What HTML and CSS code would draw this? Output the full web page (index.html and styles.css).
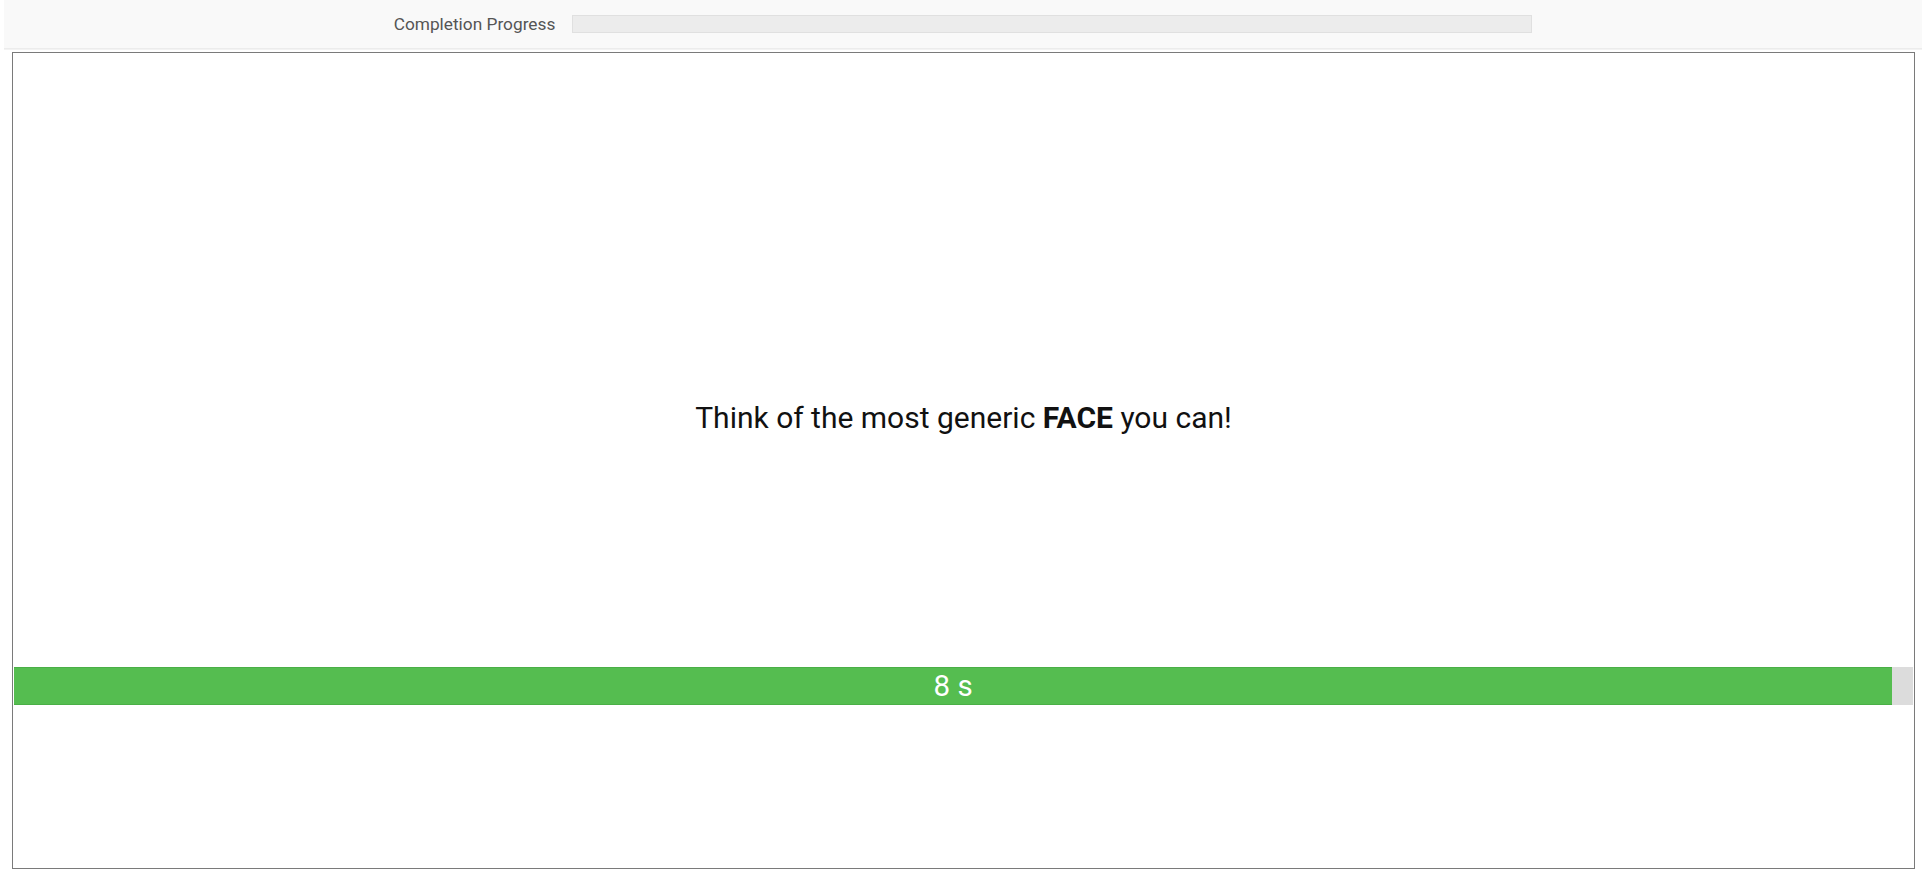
FILE: index.html
```html
<!DOCTYPE html>
<html>
<head>
<meta charset="utf-8">
<link rel="stylesheet" href="styles.css">
</head>
<body>
<header class="topbar">
  <span class="progress-label">Completion Progress</span>
  <div class="progress-track"><div class="progress-fill"></div></div>
</header>
<main class="frame">
  <section class="stimulus">
    <p class="prompt">Think of the most generic <b>FACE</b> you can!</p>
  </section>
  <div class="timer">
    <div class="timer-fill" style="width: 98.9%"><span class="timer-text">8 s</span></div>
  </div>
</main>
</body>
</html>
```

FILE: styles.css
```css
html, body {
  margin: 0;
  padding: 0;
  background: #ffffff;
  font-family: Roboto, "Liberation Sans", sans-serif;
}
body {
  padding: 0 8px 0 4px;
}
.topbar {
  height: 48px;
  background: #f9f9f9;
  border-bottom: 1px solid #ececec;
  box-shadow: 0 1px 0 #f3f3f3;
  display: flex;
  align-items: center;
  justify-content: center;
  gap: 17px;
}
.progress-label {
  font-size: 17.3px;
  color: #555555;
}
.progress-track {
  width: 958px;
  height: 16px;
  background: #ececec;
  border: 1px solid #e0e0e0;
}
.progress-fill {
  width: 0;
  height: 100%;
}
.frame {
  margin: 3px 0 0 8px;
  width: 1901px;
  height: 815px;
  border: 1px solid #7a7a7a;
  display: flex;
  flex-direction: column;
}
.stimulus {
  height: 614px;
  box-sizing: border-box;
  padding-top: 347px;
}
.prompt {
  margin: 0;
  text-align: center;
  font-size: 30px;
  line-height: 36px;
  color: #111111;
}
.prompt b {
  font-weight: 700;
}
.timer {
  margin: 0 1px;
  height: 38px;
  background: #dcdcdc;
  display: flex;
}
.timer-fill {
  height: 100%;
  background: #55bd50;
  border-top: 1px solid #4aaf46;
  border-bottom: 1px solid #4aaf46;
  box-sizing: border-box;
  display: flex;
  align-items: center;
  justify-content: center;
}
.timer-text {
  color: #ffffff;
  font-size: 29.5px;
  line-height: 34px;
}
```
